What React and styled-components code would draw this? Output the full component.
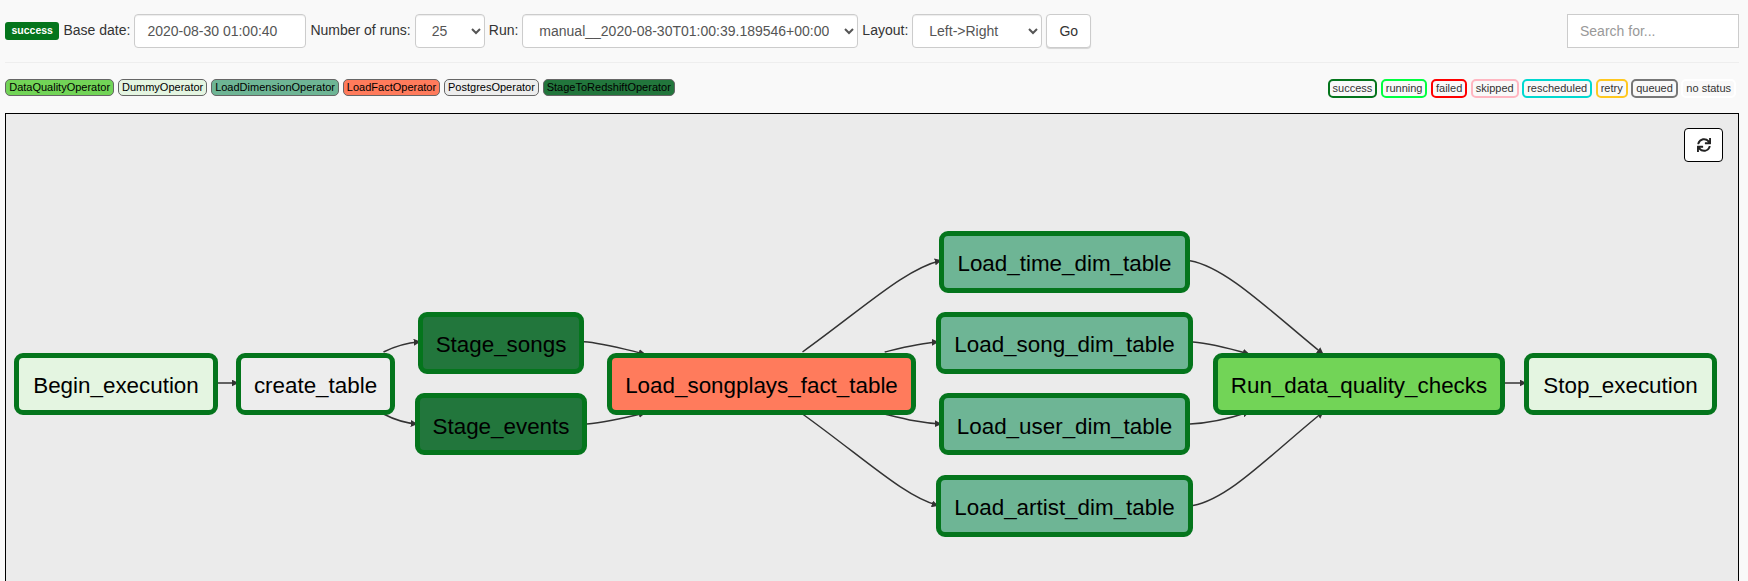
import React from "react";
import styled, { createGlobalStyle } from "styled-components";
import { FaSync } from "react-icons/fa";

const Global = createGlobalStyle`
  html, body { margin: 0; height: 100%; overflow: hidden; background: #f9f9f9; }
  body { font-family: "Liberation Sans", Arial, sans-serif; font-size: 14px; color: #333; }
`;

const Page = styled.div`
  height: 581px;
  overflow: hidden;
  padding: 14px 9px 0 5px;
  box-sizing: border-box;
`;
const Toolbar = styled.form`
  display: flex;
  align-items: center;
  gap: 4px;
  height: 34px;
  margin: 0;
`;
const StateBadge = styled.span`
  background: #04751c;
  color: #fff;
  font-size: 10.5px;
  font-weight: 700;
  line-height: 11px;
  padding: 3px 6.5px 4px;
  border-radius: 3px;
`;
const FieldLabel = styled.label`
  line-height: 20px;
  padding-bottom: 3px;
`;
const controlCss = `
  box-sizing: border-box;
  height: 34px;
  padding: 6px 12px;
  font: 14px "Liberation Sans", Arial, sans-serif;
  color: #555;
  background-color: #fff;
  border: 1px solid #ccc;
  border-radius: 4px;
  box-shadow: inset 0 1px 1px rgba(0,0,0,.075);
`;
const TextInput = styled.input`
  ${controlCss}
  width: ${(p) => p.$w}px;
`;
const SelectBox = styled.select`
  ${controlCss}
  width: ${(p) => p.$w}px;
`;
const GoButton = styled.button`
  box-sizing: border-box;
  width: 45px;
  height: 34px;
  font: 14px "Liberation Sans", Arial, sans-serif;
  color: #333;
  background: #fff;
  border: 1px solid #ccc;
  border-radius: 4px;
  box-shadow: 0 1px 1px rgba(0,0,0,.15);
`;
const SearchInput = styled.input`
  box-sizing: border-box;
  width: 172px;
  height: 34px;
  margin-left: auto;
  padding: 6px 12px;
  font: 14px "Liberation Sans", Arial, sans-serif;
  color: #555;
  background: #fff;
  border: 1px solid #ccc;
  border-radius: 0;
  &::placeholder { color: #999; }
`;
const Divider = styled.hr`
  margin: 14px 0 0;
  border: 0;
  border-top: 1px solid #eee;
`;
const LegendRow = styled.div`
  display: flex;
  align-items: flex-start;
  justify-content: space-between;
  height: 50px;
  padding-top: 16px;
  box-sizing: border-box;
`;
const LegendGroup = styled.div`
  display: flex;
  gap: ${(p) => p.$gap}px;
  margin-right: ${(p) => p.$end || 0}px;
`;
const OperatorChip = styled.span`
  box-sizing: border-box;
  height: 17px;
  line-height: 15px;
  padding: 0 3.2px;
  font-size: 11px;
  color: #000;
  background: ${(p) => p.$bg};
  border: 1px solid #666;
  border-radius: 5px;
`;
const StatusChip = styled.span`
  box-sizing: border-box;
  height: 19px;
  line-height: 15px;
  padding: 0 3px;
  font-size: 11px;
  color: #333;
  background: #f9f9f9;
  border: 2px solid ${(p) => p.$color};
  border-radius: 5px;
`;
const Canvas = styled.div`
  position: relative;
  height: 520px;
  background: #ebebeb;
  border: 1px solid #000;
  box-sizing: border-box;
`;
const EdgeLayer = styled.svg`
  position: absolute;
  left: -6px;
  top: -115px;
  width: 1748px;
  height: 700px;
`;
const Node = styled.div`
  position: absolute;
  left: ${(p) => p.$x - 6}px;
  top: ${(p) => p.$y - 115}px;
  width: ${(p) => p.$w}px;
  height: 62px;
  box-sizing: border-box;
  display: flex;
  align-items: center;
  justify-content: center;
  padding-top: 5px;
  font-size: 22.4px;
  color: #000;
  white-space: nowrap;
  background: ${(p) => p.$bg};
  border: 5px solid #04751c;
  border-radius: 9px;
`;
const RefreshButton = styled.button`
  position: absolute;
  left: 1678px;
  top: 14px;
  width: 39px;
  height: 34px;
  display: flex;
  align-items: center;
  justify-content: center;
  padding: 0;
  color: #222;
  background: #fff;
  border: 1px solid #000;
  border-radius: 4px;
  font-size: 14px;
`;

const COLORS = {
  quality: "#72d457",
  dummy: "#e4f5e1",
  dim: "#6eb595",
  fact: "#ff7b5c",
  pg: "#ededed",
  stage: "#22763c",
};

const operators = [
  ["DataQualityOperator", COLORS.quality],
  ["DummyOperator", COLORS.dummy],
  ["LoadDimensionOperator", COLORS.dim],
  ["LoadFactOperator", COLORS.fact],
  ["PostgresOperator", COLORS.pg],
  ["StageToRedshiftOperator", COLORS.stage],
];
const statuses = [
  ["success", "#04751c"],
  ["running", "#00ff40"],
  ["failed", "#ff0000"],
  ["skipped", "#ffb6c1"],
  ["rescheduled", "#00d8d0"],
  ["retry", "#ffc820"],
  ["queued", "#777777"],
  ["no status", "#ffffff"],
];
const nodes = [
  ["Begin_execution", 14, 353.5, 204, COLORS.dummy],
  ["create_table", 236, 353.5, 159, COLORS.pg],
  ["Stage_songs", 418, 312.5, 166, COLORS.stage],
  ["Stage_events", 415, 394, 172, COLORS.stage],
  ["Load_songplays_fact_table", 607, 353.5, 309, COLORS.fact],
  ["Load_time_dim_table", 939, 231.5, 251, COLORS.dim],
  ["Load_song_dim_table", 936, 312.5, 257, COLORS.dim],
  ["Load_user_dim_table", 939, 394, 251, COLORS.dim],
  ["Load_artist_dim_table", 936, 475.5, 257, COLORS.dim],
  ["Run_data_quality_checks", 1213, 353.5, 292, COLORS.quality],
  ["Stop_execution", 1524, 353.5, 193, COLORS.dummy],
];
const edges = [
  "M217,384 L238,384",
  "M383.5,353 C395,347 405,344 420,342.7",
  "M383.5,415 C395,421 405,424 417,425",
  "M584,342.7 C600,343.5 620,349 645,355",
  "M587,425 C605,423.5 620,420 645,414",
  "M802.5,353 C865,308 905,270 941,261.5",
  "M884.7,353 C905,348 920,344 938,343",
  "M884.7,415 C905,420 920,424 941,425",
  "M802.5,415 C865,460 905,498 938,506.5",
  "M1190,261.7 C1226,268 1270,312 1323,355",
  "M1193,343 C1210,344 1228,349 1249,355",
  "M1190,425 C1210,424 1228,420 1249,413",
  "M1193,506.5 C1229,500 1270,456 1323,413",
  "M1505,384 L1526,384",
];

export default function App() {
  return (
    <Page>
      <Global />
      <Toolbar>
        <StateBadge>success</StateBadge>
        <FieldLabel>Base date:</FieldLabel>
        <TextInput $w={172} defaultValue="2020-08-30 01:00:40" />
        <FieldLabel>Number of runs:</FieldLabel>
        <SelectBox $w={70} defaultValue="25"><option>25</option></SelectBox>
        <FieldLabel>Run:</FieldLabel>
        <SelectBox $w={336} defaultValue="r">
          <option value="r">manual__2020-08-30T01:00:39.189546+00:00</option>
        </SelectBox>
        <FieldLabel>Layout:</FieldLabel>
        <SelectBox $w={130} defaultValue="l"><option value="l">{"Left->Right"}</option></SelectBox>
        <GoButton type="button">Go</GoButton>
        <SearchInput placeholder="Search for..." />
      </Toolbar>
      <Divider />
      <LegendRow>
        <LegendGroup $gap={3.5}>
          {operators.map(([name, bg]) => (
            <OperatorChip key={name} $bg={bg}>{name}</OperatorChip>
          ))}
        </LegendGroup>
        <LegendGroup $gap={3.5} $end={3}>
          {statuses.map(([name, color]) => (
            <StatusChip key={name} $color={color}>{name}</StatusChip>
          ))}
        </LegendGroup>
      </LegendRow>
      <Canvas>
        <EdgeLayer viewBox="0 0 1748 700">
          <defs>
            <marker id="arrow" viewBox="0 0 10 10" refX="9" refY="5" markerWidth="7" markerHeight="7" markerUnits="userSpaceOnUse" orient="auto">
              <path d="M0,0 L10,5 L0,10 z" fill="#333" />
            </marker>
          </defs>
          {edges.map((d) => (
            <path key={d} d={d} fill="none" stroke="#333" strokeWidth="1.5" markerEnd="url(#arrow)" />
          ))}
        </EdgeLayer>
        {nodes.map(([name, x, y, w, bg]) => (
          <Node key={name} $x={x} $y={y} $w={w} $bg={bg}>{name}</Node>
        ))}
        <RefreshButton type="button" aria-label="Refresh"><FaSync /></RefreshButton>
      </Canvas>
    </Page>
  );
}
